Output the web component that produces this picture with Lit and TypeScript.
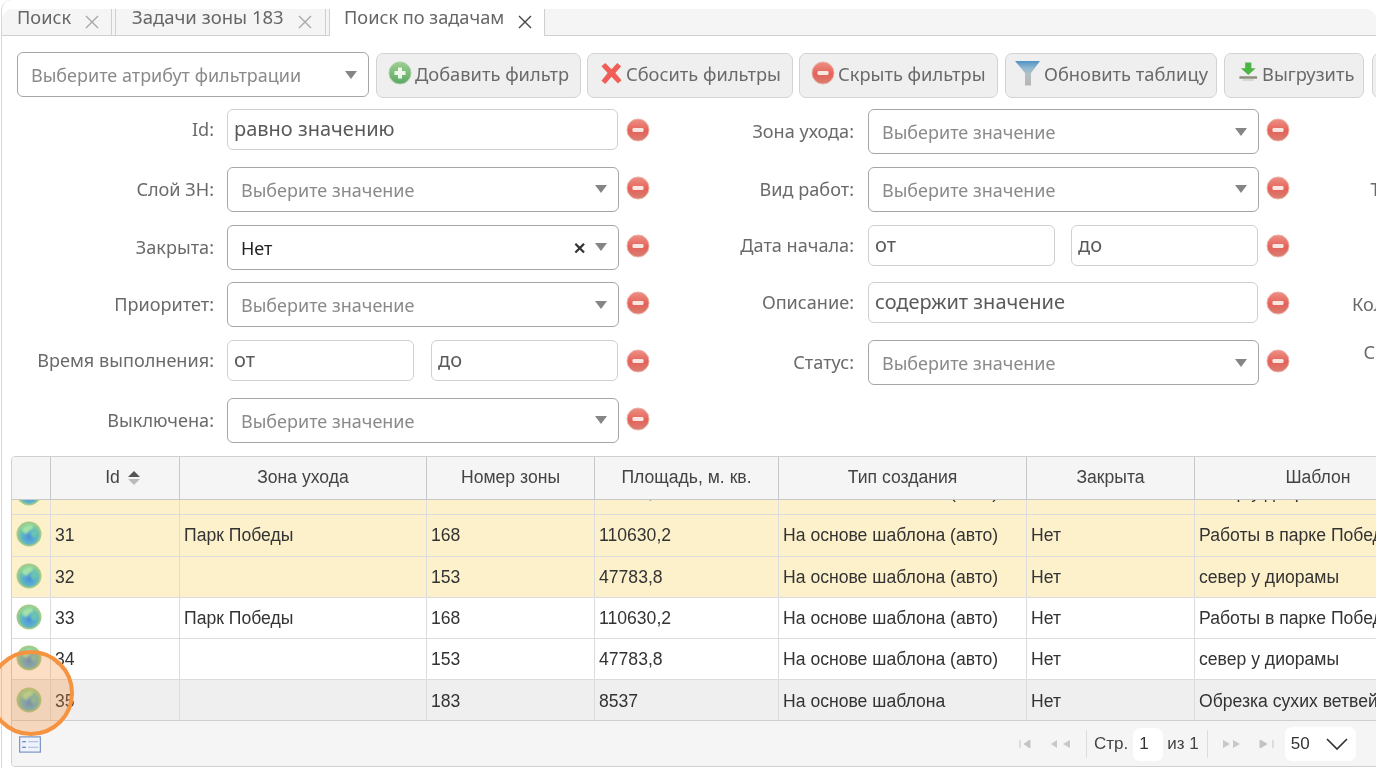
import { LitElement, html, css } from "lit";
import { customElement } from "lit/decorators.js";

const minus = html`<svg class="rm" viewBox="0 0 24 24" width="24" height="24"><defs><linearGradient id="r" x1="0" y1="0" x2="0" y2="1"><stop offset="0" stop-color="#ee8f84"/><stop offset=".55" stop-color="#e4625a"/><stop offset="1" stop-color="#d97f72"/></linearGradient></defs><circle cx="12" cy="12" r="11" fill="url(#r)" stroke="#e9b1a6" stroke-width="1"/><rect x="6.500" y="10" width="11" height="4" rx="1.200" fill="#f8e6e2"/></svg>`;
const plus = html`<svg class="ic" viewBox="0 0 24 24" width="24" height="24"><defs><linearGradient id="g" x1="0" y1="0" x2="0" y2="1"><stop offset="0" stop-color="#9dce8f"/><stop offset="1" stop-color="#5aa864"/></linearGradient></defs><circle cx="12" cy="12" r="11" fill="url(#g)" stroke="#a9cfa4"/><path d="M10 6.500h4v3.500h3.500v4H14v3.500h-4V14H6.500v-4H10z" fill="#eef8ea"/></svg>`;
const cross = html`<svg class="ic" viewBox="0 0 24 24" width="23" height="24"><path d="M5.500 1.500 12 8l6-6.500 4 3.500-6 7 6.500 7.500-3.800 3.500L12 16l-6.500 7.500L1.500 20 8 12 1.500 5z" fill="#ef5f58"/></svg>`;
const funnel = html`<svg class="ic" viewBox="0 0 26 26" width="26" height="26"><defs><linearGradient id="f" x1="0" y1="0" x2="0" y2="1"><stop offset="0" stop-color="#4f93c4"/><stop offset=".3" stop-color="#93b8cf"/><stop offset=".55" stop-color="#b4bfc4"/><stop offset="1" stop-color="#b5b5b5"/></linearGradient></defs><path d="M0 1h25l-9 12v12.500h-6V13z" fill="url(#f)"/></svg>`;
const download = html`<svg class="ic" viewBox="0 0 22 24" width="21" height="24"><path d="M7.500 1h6.500v6h4.500L10.800 14 3 7h4.500z" fill="#4cb544"/><path d="M1.500 15.500h18.500v2.500H1.500z" fill="#8f8f80"/><path d="M5 18.500h11.500v1.500H5z" fill="#cfcfc6"/></svg>`;
const arrow = html`<svg class="caret" viewBox="0 0 12 8" width="12" height="8"><path d="M0 0h12L6 8z" fill="#858585"/></svg>`;
const globe = html`<svg class="globe" viewBox="0 0 26 26" width="26" height="26"><defs><radialGradient id="w" cx=".52" cy=".62" r=".58"><stop offset="0" stop-color="#4a8fd6"/><stop offset=".5" stop-color="#5aaed0"/><stop offset=".8" stop-color="#71c4a6"/><stop offset="1" stop-color="#8ed093"/></radialGradient><filter id="b" x="-20%" y="-20%" width="140%" height="140%"><feGaussianBlur stdDeviation=".9"/></filter></defs><circle cx="13" cy="13" r="12.500" fill="#a6c987"/><circle cx="13" cy="13" r="10.800" fill="url(#w)"/><g filter="url(#b)"><path d="M6 8c2-3 7-5 10-4 2 1 1 4-1 5-2 0-3 3-5 4-2-1-4-2-4-5z" fill="#a6e3a6"/><path d="M15 11c2-2 5-2 6 0 0 3-1 5-3 6-2-1-4-3-3-6z" fill="#6cc4b2"/></g></svg>`;
const cols = ["", "Id", "Зона ухода", "Номер зоны", "Площадь, м. кв.", "Тип создания", "Закрыта", "Шаблон"];
const rows = [
  { c: "sel first", d: ["30", "", "153", "47783,8", "На основе шаблона (авто)", "Нет", "север у диорамы"] },
  { c: "sel", d: ["31", "Парк Победы", "168", "110630,2", "На основе шаблона (авто)", "Нет", "Работы в парке Победы"] },
  { c: "sel", d: ["32", "", "153", "47783,8", "На основе шаблона (авто)", "Нет", "север у диорамы"] },
  { c: "", d: ["33", "Парк Победы", "168", "110630,2", "На основе шаблона (авто)", "Нет", "Работы в парке Победы"] },
  { c: "", d: ["34", "", "153", "47783,8", "На основе шаблона (авто)", "Нет", "север у диорамы"] },
  { c: "hov", d: ["35", "", "183", "8537", "На основе шаблона", "Нет", "Обрезка сухих ветвей"] },
];
type F = { l: string; t: string; v?: string; high?: boolean };
const col1: F[] = [
  { l: "Id:", t: "input", v: "равно значению" },
  { l: "Слой ЗН:", t: "select" },
  { l: "Закрыта:", t: "chosen", v: "Нет" },
  { l: "Приоритет:", t: "select" },
  { l: "Время выполнения:", t: "range" },
  { l: "Выключена:", t: "select" },
];
const col2: F[] = [
  { l: "Зона ухода:", t: "select" },
  { l: "Вид работ:", t: "select" },
  { l: "Дата начала:", t: "range" },
  { l: "Описание:", t: "input", v: "содержит значение" },
  { l: "Статус:", t: "select" },
];
const col3: F[] = [
  { l: "", t: "none" },
  { l: "Тип создания:", t: "none" },
  { l: "", t: "none" },
  { l: "Количество раз:", t: "none" },
  { l: "Сгенерирован:", t: "none", high: true },
];

@customElement("app-root")
export class AppRoot extends LitElement {
  static styles = css`
    :host { display: block; width: 1380px; height: 768px; background: #fff; overflow: hidden; position: relative; font-family: "Noto Sans", sans-serif; color: #5a5a5a; filter: blur(0.4px); }
    .panel { width: 1375px; height: 768px; margin-left: 1px; padding-top: 9px; box-sizing: border-box; border-left: 1px solid #d8d8d8; overflow: hidden; border-radius: 10px 10px 0 0; }
    .tabs { display: flex; height: 26px; background: #f5f5f5; border-bottom: 1px solid #d0d0d0; font-size: 18.200px; border-radius: 10px 10px 0 0; }
    .tab { display: flex; align-items: flex-start; height: 26px; box-sizing: border-box; border-right: 1px solid #cfcfcf; line-height: 16px; color: #666; }
    .tab svg { margin-top: 6px; flex: none; }
    .t1 { width: 110px; padding-left: 15px; margin-right: 3px; }
    .t2 { width: 211px; padding-left: 16px; border-left: 1px solid #cfcfcf; margin-right: 3px; font-size: 18.500px; }
    .t3 { width: 216px; padding-left: 14px; height: 27px; background: #fff; border-left: 1px solid #cfcfcf; }
    .tab span { margin-right: 14px; white-space: nowrap; }
    .toolbar { display: flex; margin: 16px 0 0 15px; gap: 6px; height: 46px; align-items: flex-start; width: 1500px; }
    .sel0 { width: 352px; flex: none; height: 45px; margin-right: 1px; }
    .btn { display: flex; align-items: center; gap: 3px; flex: none; height: 45px; margin-top: 1px; padding: 0 0 5px 9px; box-sizing: border-box; background: #efefef; border: 1px solid #d3d3d3; border-radius: 7px; font-size: 18.300px; color: #6a6a6a; white-space: nowrap; }
    .btn .rm { margin: 0; }
    .b1 { width: 205px; padding-left: 11px; }
    .b2 { width: 206px; padding-left: 12px; }
    .b3 { width: 199px; padding-left: 11px; }
    .b4 { width: 212px; margin-left: 1px; }
    .b5 { width: 140px; margin-left: 1px; padding-left: 13px; }
    .b6 { width: 60px; margin-left: 2px; }
    .select { display: flex; align-items: center; box-sizing: border-box; height: 45px; background: #fff; border: 1px solid #a6a6a6; border-radius: 6px; padding: 0 11px 0 13px; font-size: 18px; color: #8a8a8a; white-space: nowrap; }
    .select .txt { flex: 1; padding-top: 1px; }
    .select .val { color: #222; }
    .select .clr { color: #333; font-size: 16px; font-weight: 700; margin: 3px 9px 0 0; font-family: "Liberation Sans", sans-serif; }
    .filters { display: flex; margin-top: 11px; width: 2000px; }
    .col { flex: none; display: grid; grid-auto-rows: 57.800px; }
    .c1 { width: 648px; --lw: 212px; --lg: 13px; --cw: 392px; }
    .c2 { width: 640px; --lw: 204px; --lg: 14px; --cw: 391px; }
    .c3 { width: 640px; --lw: 204px; --lg: 14px; --cw: 391px; }
    .field { display: flex; align-items: flex-start; }
    .label { flex: none; width: var(--lw); margin-right: var(--lg); text-align: right; font-size: 18.100px; white-space: nowrap; color: #6a6a6a; line-height: 45px; }
    .label.short { line-height: 41px; }
    .label.high { line-height: 25px; }
    .ctl { flex: none; width: var(--cw); box-sizing: border-box; }
    .ctl.input, .ctl.range { width: calc(var(--cw) - 1px); margin-right: 1px; }
    .input { height: 41px; display: flex; align-items: center; padding: 0 6px 2px; border: 1px solid #d0d0d0; border-radius: 6px; font-size: 20px; color: #5a5a5a; background: #fff; box-sizing: border-box; }
    .range { display: flex; justify-content: space-between; }
    .range .input { width: 187px; }
    .rm { flex: none; margin: 9px 0 0 7px; }
    .grid { margin: 0 0 0 9px; width: 1400px; height: 311px; border: 1px solid #d0d0d0; border-radius: 4px; box-sizing: border-box; display: flex; flex-direction: column; overflow: hidden; font-family: "Liberation Sans", sans-serif; font-size: 17.600px; color: #333; }
    .row { display: grid; grid-template-columns: 39px 129px 247px 168px 184px 248px 168px 247px; flex: none; height: 41.300px; box-sizing: border-box; border-bottom: 1px solid #dcdcdc; background: #fff; }
    .row > div { border-right: 1px solid #dcdcdc; display: flex; align-items: center; padding: 1px 0 0 4px; white-space: nowrap; overflow: hidden; }
    .row > .ico { padding: 0 0 2px 4px; }
    .row.first > div:not(.ico) { padding: 0 0 4px 4px; }
    .head { height: 43.500px; background: #f5f5f5; border-bottom: 1px solid #c8c8c8; color: #444; }
    .row.head > div { justify-content: center; padding: 0 0 1px; border-right-color: #c8c8c8; gap: 7px; }
    .row.head > .idc { padding-left: 16px; }
    .body { flex: none; height: 220px; overflow: hidden; }
    .first { margin-top: -26.300px; }
    .sel { background: #fdf1cc; }
    .hov { background: #efefef; }
    .foot { flex: 1; background: #f5f5f5; border-top: 1px solid #cfcfcf; display: flex; align-items: center; font-size: 17px; position: relative; padding: 1px 0 0 7px; color: #444; }
    .lst { flex: none; width: 22px; height: 17px; }
    .pager { display: flex; align-items: center; margin-left: 978px; }
    .sep { width: 1px; height: 28px; background: #dcdcdc; }
    .s1 { margin: 0 7px 0 11px; }
    .s2 { margin: 0 14px 0 8px; }
    .num { width: 30px; height: 33px; background: #fff; border-radius: 7px; display: flex; align-items: center; padding-left: 6px; box-sizing: border-box; margin: 0 4px 0 5px; color: #333; }
    .ps { display: flex; align-items: center; width: 71px; height: 34px; background: #fff; border-radius: 7px; box-sizing: border-box; padding: 0 8px 0 6px; margin-left: 7px; justify-content: space-between; color: #333; }
    .mark { position: absolute; left: -12px; top: 650px; width: 86px; height: 86px; box-sizing: border-box; border: 4.500px solid #f59340; border-radius: 50%; background: rgba(245, 147, 64, .3); }
  `;
  private control(f: F) {
    if (f.t === "input") return html`<div class="ctl input">${f.v}</div>`;
    if (f.t === "select") return html`<div class="ctl select"><span class="txt">Выберите значение</span>${arrow}</div>`;
    if (f.t === "chosen") return html`<div class="ctl select"><span class="txt val">${f.v}</span><span class="clr">✕</span>${arrow}</div>`;
    return html`<div class="ctl range"><div class="input">от</div><div class="input">до</div></div>`;
  }
  private field(f: F) {
    if (f.t === "none") return html`<div class="field"><div class="label ${f.high ? "high" : ""}">${f.l}</div></div>`;
    const short = f.t === "input" || f.t === "range";
    return html`<div class="field"><div class="label ${short ? "short" : ""}">${f.l}</div>${this.control(f)}${minus}</div>`;
  }
  private x(color: string) {
    return html`<svg viewBox="0 0 14 14" width="14" height="14"><path d="M1 1l12 12M13 1 1 13" stroke="${color}" stroke-width="1.400" fill="none"/></svg>`;
  }
  render() {
    return html`
      <div class="panel">
        <div class="tabs">
          <div class="tab t1"><span>Поиск</span>${this.x("#a8a8a8")}</div>
          <div class="tab t2"><span>Задачи зоны 183</span>${this.x("#a8a8a8")}</div>
          <div class="tab t3"><span>Поиск по задачам</span>${this.x("#444")}</div>
        </div>
        <div class="toolbar">
          <div class="select sel0"><span class="txt">Выберите атрибут фильтрации</span>${arrow}</div>
          <div class="btn b1">${plus}Добавить фильтр</div>
          <div class="btn b2">${cross}Сбосить фильтры</div>
          <div class="btn b3">${minus}Скрыть фильтры</div>
          <div class="btn b4">${funnel}Обновить таблицу</div>
          <div class="btn b5">${download}Выгрузить</div>
          <div class="btn b6"></div>
        </div>
        <div class="filters">
          <div class="col c1">${col1.map((f) => this.field(f))}</div>
          <div class="col c2">${col2.map((f) => this.field(f))}</div>
          <div class="col c3">${col3.map((f) => this.field(f))}</div>
        </div>
        <div class="grid">
          <div class="row head">
            ${cols.map((c, i) => html`<div class="${i === 1 ? "idc" : ""}">${c}${i === 1 ? html`<svg viewBox="0 0 14 16" width="14" height="16"><path d="M7 1l6 6H1z" fill="#555"/><path d="M1 9h12l-6 6z" fill="#bbb"/></svg>` : ""}</div>`)}
          </div>
          <div class="body">
            ${rows.map((r) => html`<div class="row ${r.c}"><div class="ico">${globe}</div>${r.d.map((v) => html`<div>${v}</div>`)}</div>`)}
          </div>
          <div class="foot">
            <svg class="lst" viewBox="0 0 24 18"><rect x=".7" y=".7" width="22.600" height="16.600" fill="#eef2fa" stroke="#7a94c4" stroke-width="1.300"/><path d="M3.500 6h4M3.500 12h4" stroke="#4a6aa8" stroke-width="1.300"/><path d="M10 6h11M10 12h11" stroke="#a6b6d6" stroke-width="1.300"/></svg>
            <div class="pager">
              <svg viewBox="0 0 56 12" width="56" height="12"><path d="M1 2v8M11 2v8L5 6z" fill="#c4c4c4" stroke="#c4c4c4"/><path d="M38 2v8l-6-4zM51 2v8l-7-4z" fill="#c8c8c8"/></svg>
              <div class="sep s1"></div>
              <span>Стр.</span><div class="num">1</div><span>из 1</span>
              <div class="sep s2"></div>
              <svg viewBox="0 0 56 12" width="56" height="12"><path d="M1 2v8l7-4zM11 2v8l7-4z" fill="#c8c8c8"/><path d="M38 2v8l7-4zM51 2v8" fill="#c4c4c4" stroke="#c4c4c4"/></svg>
              <div class="ps"><span>50</span><svg viewBox="0 0 22 12" width="22" height="12"><path d="M1 1l10 10L21 1" stroke="#333" stroke-width="1.700" fill="none"/></svg></div>
            </div>
          </div>
        </div>
      </div>
      <div class="mark"></div>
    `;
  }
}
